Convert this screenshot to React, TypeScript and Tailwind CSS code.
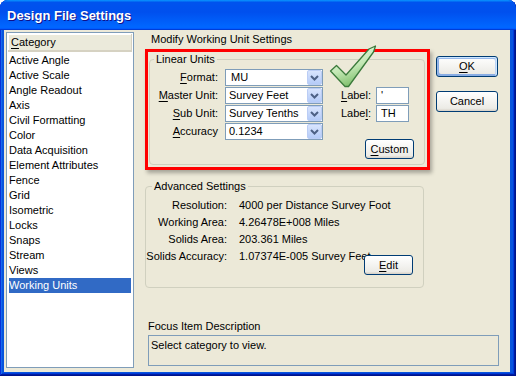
import React from 'react';

const categories = [
  'Active Angle',
  'Active Scale',
  'Angle Readout',
  'Axis',
  'Civil Formatting',
  'Color',
  'Data Acquisition',
  'Element Attributes',
  'Fence',
  'Grid',
  'Isometric',
  'Locks',
  'Snaps',
  'Stream',
  'Views',
  'Working Units',
];

const U: React.FC<{ children: React.ReactNode }> = ({ children }) => (
  <span className="underline underline-offset-[2px]">{children}</span>
);

const XPButton: React.FC<{ children: React.ReactNode; className?: string; isDefault?: boolean }> = ({
  children,
  className = '',
  isDefault,
}) => (
  <button
    className={`flex items-center justify-center rounded-[3px] border border-[#003C74] bg-[linear-gradient(180deg,#fff,#ecebe6_86%,#d6d0c5)] leading-[13px] ${
      isDefault
        ? 'shadow-[inset_-1px_1px_#cee7ff,inset_1px_2px_#98b8ea,inset_-2px_2px_#bcd4f6,inset_1px_-1px_#89ade4,inset_2px_-2px_#89ade4]'
        : ''
    } ${className}`}
  >
    {children}
  </button>
);

const Combo: React.FC<{ value: string; indent?: boolean }> = ({ value, indent }) => (
  <div className="flex h-[17px] w-[98px] items-stretch border border-[#7F9DB9] bg-white">
    <span className={`flex-1 leading-[15px] ${indent ? 'pl-[5px]' : 'pl-[3px]'}`}>{value}</span>
    <div className="flex w-[15px] items-center justify-center rounded-[2px] border border-[#BBCDF5] bg-[linear-gradient(180deg,#d8e4fd,#b4cbf8)]">
      <svg width="9" height="6" viewBox="0 0 9 6">
        <path d="M1 1 L4.5 4.5 L8 1" fill="none" stroke="#4D6185" strokeWidth="2" />
      </svg>
    </div>
  </div>
);

const TextBox: React.FC<{ value: string }> = ({ value }) => (
  <div className="h-[17px] w-[33px] border border-[#7F9DB9] bg-white pl-[4px] leading-[15px]">{value}</div>
);

const CheckMark = () => (
  <svg width="48" height="44" viewBox="0 0 48 44" className="absolute left-[181px] top-[-7px]">
    <defs>
      <linearGradient id="chk" x1="0" y1="0" x2="0.4" y2="1">
        <stop offset="0" stopColor="#F2FBEC" />
        <stop offset="0.6" stopColor="#C4E8B6" />
        <stop offset="1" stopColor="#7FBF6C" />
      </linearGradient>
    </defs>
    <polygon
      points="1.5,26 7.5,20.5 17,30 40,4 46.5,1 44.5,7 19.5,41.5 16,41.5"
      fill="url(#chk)"
      stroke="#3B7A3B"
      strokeWidth="1.3"
      strokeLinejoin="round"
    />
  </svg>
);

const App: React.FC = () => {
  return (
    <div className="h-[376px] w-[516px] font-['Liberation_Sans',Arial,sans-serif] text-[11px] text-black">
      <div className="flex h-full w-full flex-col rounded-t-[8px] bg-[#0855DD] shadow-[inset_-1px_-1px_#00138c,inset_1px_1px_#0831d9,inset_-2px_-2px_#001ea0,inset_2px_2px_#166aee,inset_-3px_-3px_#003bda,inset_3px_3px_#0855dd]">
        {/* title bar */}
        <div className="flex h-[30px] items-center rounded-t-[8px] bg-[linear-gradient(180deg,#0997ff,#0053ee_8%,#0050ee_40%,#06f_88%,#06f_93%,#005bff_95%,#003dd7_96%,#003dd7)] pl-[7px] pt-[1px]">
          <span className="text-[13px] font-bold leading-[16px] text-white [text-shadow:1px_1px_#0f1089]">
            Design File Settings
          </span>
        </div>

        {/* body */}
        <div className="mb-[4px] ml-[4px] mr-[6px] flex flex-1 bg-[#ECE9D8] pl-[2px] pt-[2px]">
          {/* category list */}
          <div className="flex h-[336px] w-[128px] flex-col border border-[#7F9DB9] bg-white p-[1px]">
            <div className="h-[18px] border-b-[2px] border-r border-[#D6D2C2] bg-[#EBEADB] pl-[3px] leading-[17px] shadow-[inset_1px_1px_#fff]">
              <U>C</U>ategory
            </div>
            <div className="flex flex-col pt-[1px]">
              {categories.map((c) => (
                <div
                  key={c}
                  className={`mx-[1px] h-[15px] leading-[15px] ${
                    c === 'Working Units' ? 'bg-[#316AC5] text-white' : ''
                  }`}
                >
                  {c}
                </div>
              ))}
            </div>
          </div>

          {/* main area */}
          <div className="ml-[11px] flex flex-col">
            <div className="h-[15px] pl-[6px] leading-[15px]">Modify Working Unit Settings</div>

            <div className="mt-[2px] flex">
              <div className="relative h-[121px] w-[285px] border-[3px] border-[#FF0000] shadow-[2px_3px_4px_rgba(0,0,0,0.3)]">
                <fieldset className="ml-[1px] mt-[1px] h-[112px] w-[276px] rounded-[4px] border border-[#D0D0BF]">
                  <legend className="ml-[4px] px-[2px] leading-[13px]">Linear Units</legend>
                  <div className="mt-[3px] flex flex-col gap-[1px]">
                    <div className="flex h-[17px] items-center">
                      <span className="w-[68px] text-right">
                        <U>F</U>ormat:
                      </span>
                      <div className="ml-[7px]">
                        <Combo value="MU" indent />
                      </div>
                    </div>
                    <div className="flex h-[17px] items-center">
                      <span className="w-[68px] text-right">
                        <U>M</U>aster Unit:
                      </span>
                      <div className="ml-[7px]">
                        <Combo value="Survey Feet" />
                      </div>
                      <span className="ml-[18px] w-[35px]">
                        <U>L</U>abel:
                      </span>
                      <TextBox value="'" />
                    </div>
                    <div className="flex h-[17px] items-center">
                      <span className="w-[68px] text-right">
                        <U>S</U>ub Unit:
                      </span>
                      <div className="ml-[7px]">
                        <Combo value="Survey Tenths" />
                      </div>
                      <span className="ml-[18px] w-[35px]">
                        Labe<U>l</U>:
                      </span>
                      <TextBox value="TH" />
                    </div>
                    <div className="flex h-[17px] items-center">
                      <span className="w-[68px] text-right">
                        <U>A</U>ccuracy
                      </span>
                      <div className="ml-[7px]">
                        <Combo value="0.1234" />
                      </div>
                    </div>
                  </div>
                  <div className="-mt-[1px] flex pl-[215px]">
                    <XPButton className="h-[20px] w-[49px]">
                      <U>C</U>ustom
                    </XPButton>
                  </div>
                </fieldset>
                <CheckMark />
              </div>

              <div className="ml-[6px] flex flex-col pt-[7px]">
                <XPButton className="h-[21px] w-[62px]" isDefault>
                  <U>O</U>K
                </XPButton>
                <XPButton className="mt-[14px] h-[21px] w-[62px]">Cancel</XPButton>
              </div>
            </div>

            <fieldset className="mt-[10px] h-[108px] w-[279px] rounded-[4px] border border-[#D0D0BF]">
              <legend className="ml-[6px] px-[2px] leading-[13px]">Advanced Settings</legend>
              <div className="relative mt-[4px] flex flex-col">
                {[
                  ['Resolution:', '4000 per Distance Survey Foot'],
                  ['Working Area:', '4.26478E+008 Miles'],
                  ['Solids Area:', '203.361 Miles'],
                  ['Solids Accuracy:', '1.07374E-005 Survey Feet'],
                ].map(([k, v]) => (
                  <div key={k} className="flex h-[17px] items-center whitespace-nowrap">
                    <span className="w-[81px] text-right">{k}</span>
                    <span className="ml-[12px]">{v}</span>
                  </div>
                ))}
                <XPButton className="absolute left-[218px] top-[58px] h-[20px] w-[49px]">
                  <U>E</U>dit
                </XPButton>
              </div>
            </fieldset>

            <div className="mt-[31px] h-[15px] pl-[3px] leading-[15px]">Focus Item Description</div>
            <div className="ml-[3px] mt-[1px] h-[31px] w-[351px] border border-[#7F9DB9] pl-[2px] pt-[2px] leading-[15px]">
              Select category to view.
            </div>
          </div>
        </div>
      </div>
    </div>
  );
};

export default App;
